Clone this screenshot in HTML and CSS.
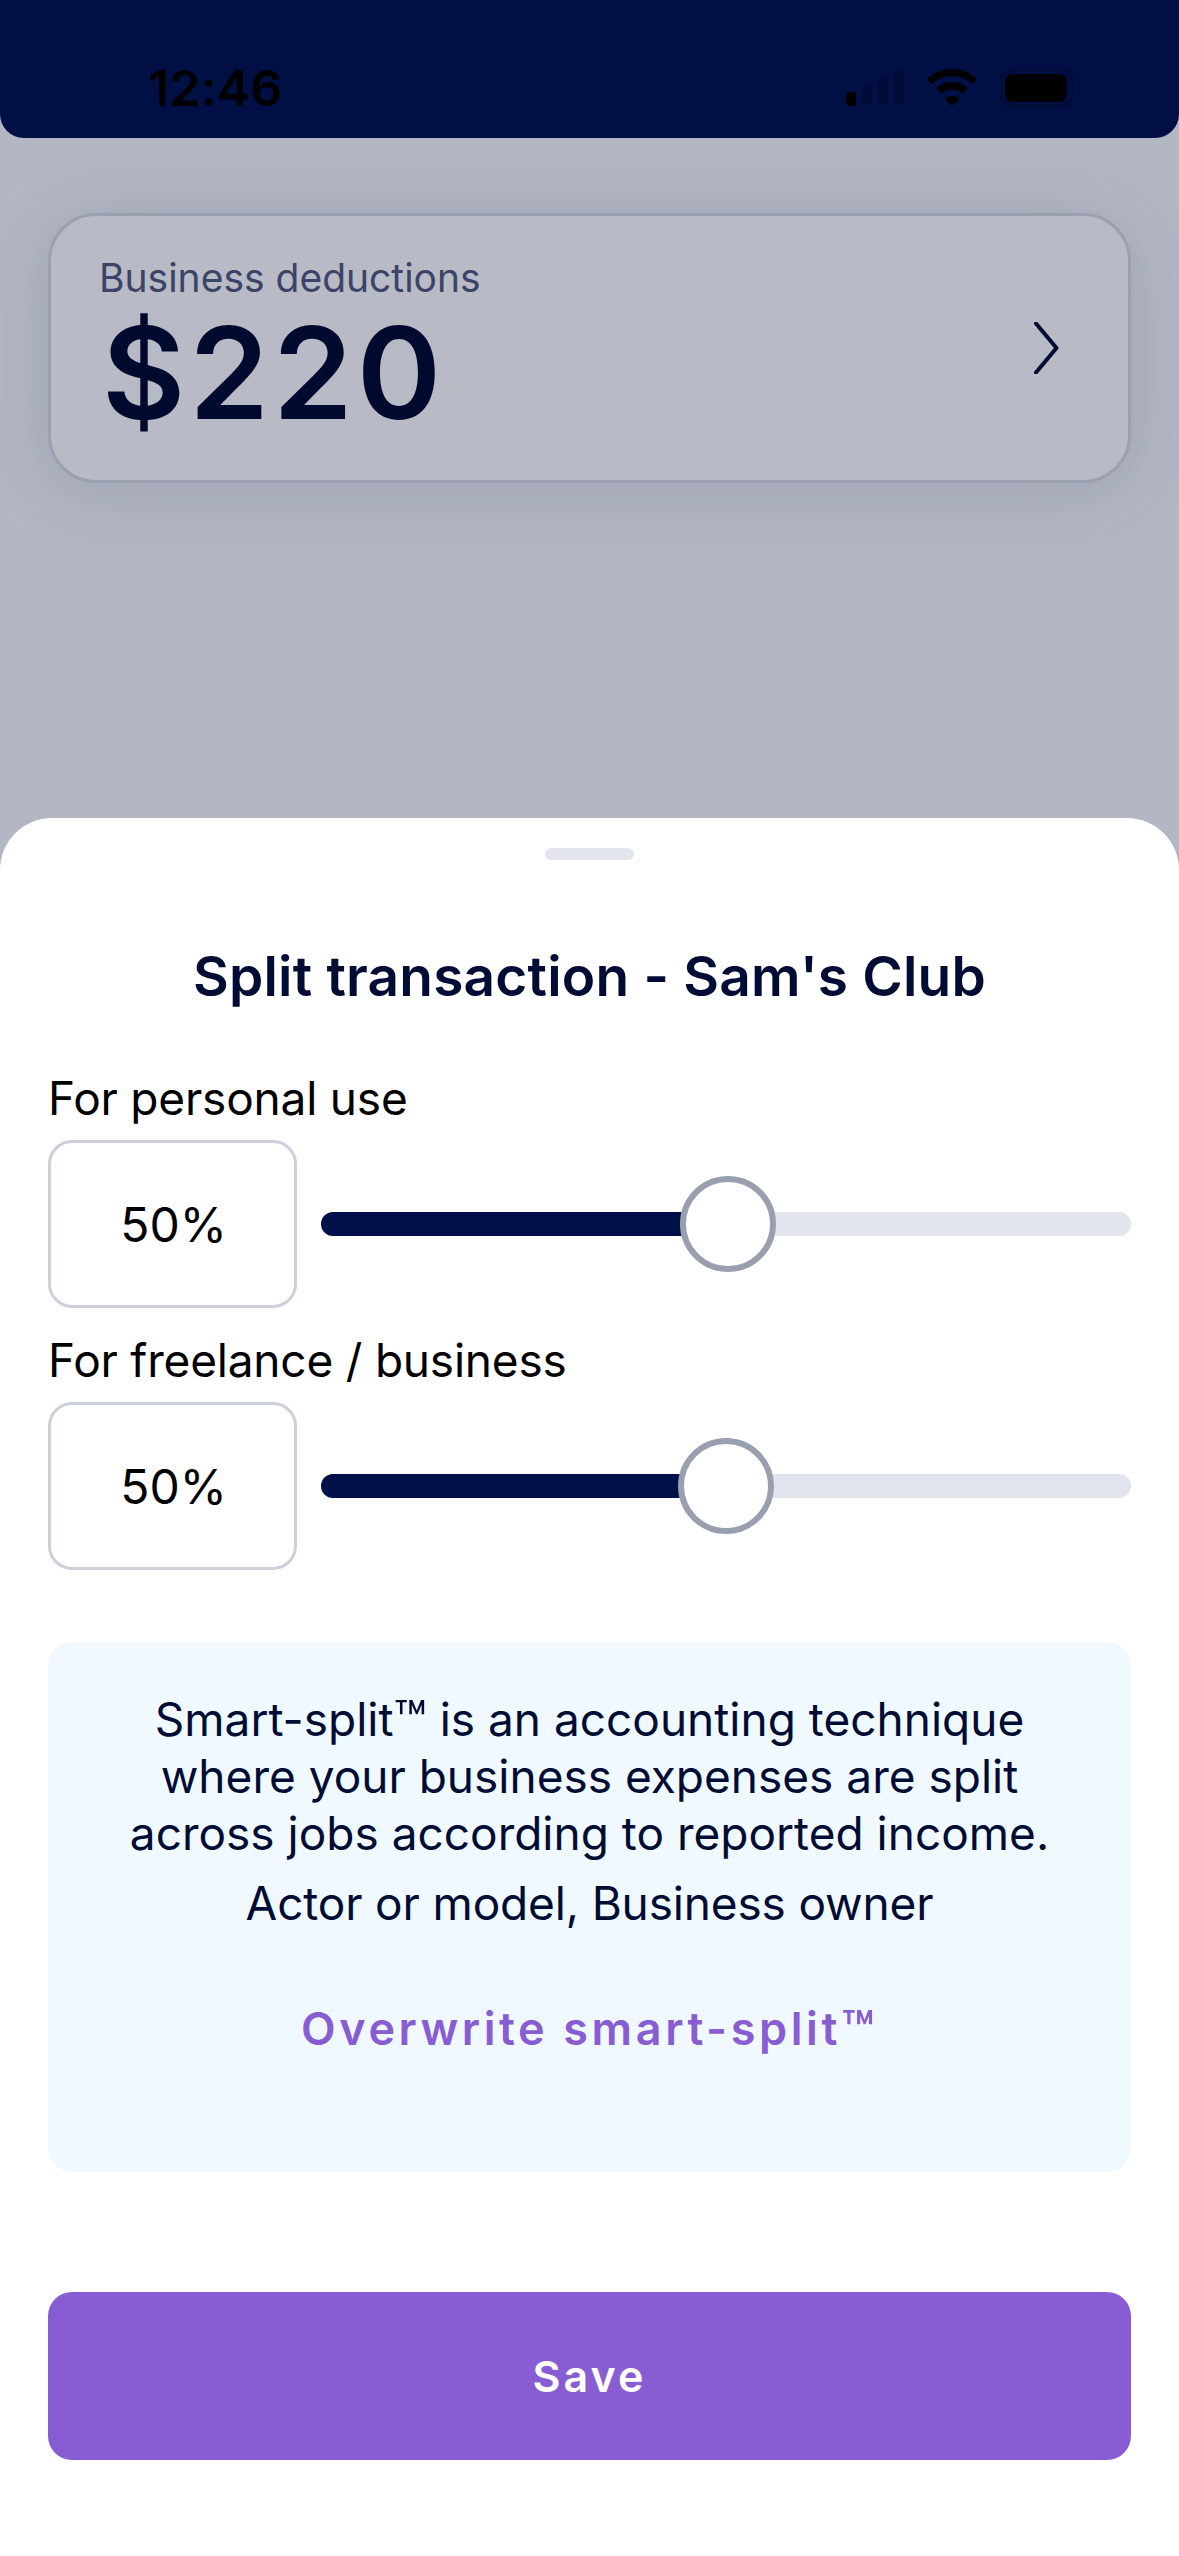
FILE: index.html
```html
<!DOCTYPE html>
<html lang="en">
  <head>
    <meta charset="UTF-8" />
    <meta name="viewport" content="width=device-width, initial-scale=1.0" />
    <title>Split transaction</title>
    <link rel="stylesheet" href="styles.css">
  </head>

  <body>
    <div class="page">
      <div class="status-bar">
        <span class="status-time">12:46</span>
        <svg class="status-icons" width="235" height="38" viewBox="0 0 235 38">
          <rect x="0" y="23" width="10" height="14" rx="3" fill="#000" />
          <rect x="16" y="16" width="10" height="21" rx="3" fill="#000c38" />
          <rect x="32" y="8" width="10" height="29" rx="3" fill="#000c38" />
          <rect x="48" y="0" width="10" height="37" rx="3" fill="#000c38" />
          <g fill="#000">
            <path d="M106 0C115.500 0 124.300 3.700 131 10L126.500 15C121 10 114 7 106 7C98 7 91 10 85.500 15L81 10C87.700 3.700 96.500 0 106 0Z" />
            <path d="M106 13C112 13 117.500 15.400 122 19L117 24.500C114 22 110 20.500 106 20.500C102 20.500 98 22 95 24.500L90 19C94.500 15.400 100 13 106 13Z" />
            <path d="M106 27C108.900 27 111.500 28 113.500 29.500L106 37L98.500 29.500C100.500 28 103.100 27 106 27Z" />
          </g>
          <rect x="155.500" y="0.500" width="71" height="36" rx="11" fill="none" stroke="#000c38" stroke-width="3.500" />
          <rect x="159" y="5" width="62" height="28" rx="8" fill="#000" />
          <path d="M231 14C233.500 15 235 16.500 235 19C235 21.500 233.500 23 231 24Z" fill="#000c38" />
        </svg>
      </div>

      <div class="backdrop">
        <div class="summary-card">
          <div class="summary-text">
            <div class="summary-label">Business deductions</div>
            <div class="summary-amount">$220</div>
          </div>
          <svg class="chevron" width="25" height="52" viewBox="0 0 25 52">
            <path d="M2 1.500L22.500 26L2 50.500" fill="none" stroke="#000c33" stroke-width="4" stroke-linecap="round" stroke-linejoin="round" />
          </svg>
        </div>
      </div>

      <div class="sheet">
        <div class="sheet-handle"></div>
        <h1 class="sheet-title">Split transaction - Sam's Club</h1>

        <div class="split-label">For personal use</div>
        <div class="split-row">
          <div class="split-value">50%</div>
          <div class="slider">
            <div class="slider-fill"></div>
            <div class="slider-thumb" style="left: 50.3%"></div>
          </div>
        </div>

        <div class="split-label split-label-second">For freelance / business</div>
        <div class="split-row">
          <div class="split-value">50%</div>
          <div class="slider">
            <div class="slider-fill"></div>
            <div class="slider-thumb" style="left: 50%"></div>
          </div>
        </div>

        <div class="info-box">
          <p class="info-text">Smart-split<span class="tm">™</span> is an accounting technique<br />where your business expenses are split<br />across jobs according to reported income.</p>
          <p class="info-jobs">Actor or model, Business owner</p>
          <a class="info-link">Overwrite smart-split<span class="tm">™</span></a>
        </div>

        <button class="save-button">Save</button>
      </div>
    </div>
  </body>
</html>
```

FILE: styles.css
```css
* {
  box-sizing: border-box;
}

html,
body {
  margin: 0;
  padding: 0;
}

.page {
  width: 1179px;
  height: 2556px;
  display: flex;
  flex-direction: column;
  overflow: hidden;
  background: #b3b7c4;
  font-family: Inter, "Liberation Sans", sans-serif;
  color: #000c33;
}

.status-bar {
  height: 138px;
  flex-shrink: 0;
  display: flex;
  justify-content: space-between;
  align-items: flex-start;
  padding: 60px 98px 0 148px;
  background: #001044;
  border-radius: 0 0 24px 24px;
}

.status-time {
  font-size: 50px;
  line-height: 56px;
  font-weight: 600;
  letter-spacing: 0.2px;
  color: #000;
}

.status-icons {
  margin-top: 9px;
}

.backdrop {
  flex: 1;
  padding: 75px 48px 0;
}

.summary-card {
  height: 270px;
  display: flex;
  align-items: center;
  justify-content: space-between;
  padding: 0 69px 0 48px;
  background: #b8bbc5;
  border: 3px solid #9a9fb2;
  border-radius: 48px;
  box-shadow: 0 8px 70px rgba(60, 66, 90, 0.18);
}

.summary-label {
  margin-top: 2px;
  font-size: 39px;
  line-height: 46px;
  color: #3a4468;
}

.summary-amount {
  margin: 2px 0 0 3px;
  font-size: 128px;
  line-height: 140px;
  font-weight: 600;
  letter-spacing: 4px;
  color: #000a2e;
}

.sheet {
  height: 1738px;
  flex-shrink: 0;
  display: flex;
  flex-direction: column;
  padding: 30px 48px 0;
  background: #fff;
  border-radius: 52px 52px 0 0;
}

.sheet-handle {
  width: 89px;
  height: 12px;
  align-self: center;
  background: #e2e5ed;
  border-radius: 6px;
}

.sheet-title {
  margin: 83px 0 0;
  font-size: 55px;
  line-height: 66px;
  font-weight: 600;
  letter-spacing: 0.2px;
  text-align: center;
}

.split-label {
  margin-top: 61px;
  font-size: 46px;
  line-height: 56px;
  letter-spacing: -0.2px;
  color: #000;
}

.split-label-second {
  margin-top: 24px;
}

.split-row {
  display: flex;
  align-items: center;
  gap: 24px;
  margin-top: 14px;
}

.split-value {
  width: 249px;
  height: 168px;
  display: flex;
  align-items: center;
  justify-content: center;
  padding-left: 2px;
  font-size: 48px;
  color: #000;
  border: 3px solid #ccd0dd;
  border-radius: 24px;
}

.slider {
  flex: 1;
  height: 24px;
  position: relative;
  background: #e2e5ed;
  border-radius: 12px;
}

.slider-fill {
  width: 50%;
  height: 100%;
  background: #00114a;
  border-radius: 12px 0 0 12px;
}

.slider-thumb {
  position: absolute;
  top: -36px;
  width: 96px;
  height: 96px;
  margin-left: -48px;
  background: #fff;
  border: 6px solid #98a0b0;
  border-radius: 50%;
}

.info-box {
  height: 530px;
  margin-top: 72px;
  padding: 49px 0 0;
  text-align: center;
  background: #f0f9ff;
  border-radius: 24px;
}

.info-text {
  margin: 0;
  font-size: 46px;
  line-height: 57px;
}

.info-jobs {
  margin: 13px 0 0;
  font-size: 46px;
  line-height: 57px;
  letter-spacing: -0.15px;
}

.info-link {
  display: block;
  margin-top: 69px;
  font-size: 45px;
  line-height: 56px;
  font-weight: 600;
  letter-spacing: 3.6px;
  color: #885dd3;
}

.tm {
  font-size: 1.18em;
  line-height: 0;
  vertical-align: -0.07em;
}

.save-button {
  height: 168px;
  margin-top: 120px;
  flex-shrink: 0;
  font-family: inherit;
  font-size: 43px;
  font-weight: 600;
  letter-spacing: 3px;
  color: #fff;
  background: #885dd3;
  border: none;
  border-radius: 24px;
}
```
